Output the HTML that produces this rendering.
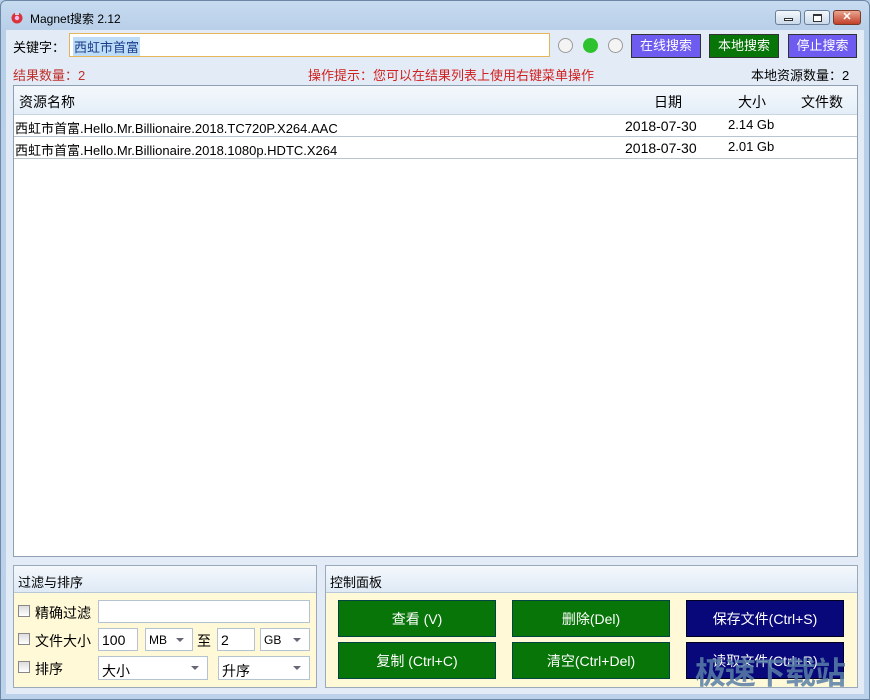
<!DOCTYPE html>
<html><head><meta charset="utf-8"><style>
*{margin:0;padding:0;box-sizing:border-box}
body{width:870px;height:700px;overflow:hidden;font-family:"Liberation Sans","Noto Sans CJK SC",sans-serif;font-size:13px;background:#b9d1ea;position:relative;color:#000}
.a{position:absolute}
.win{left:0;top:0;width:870px;height:700px;background:linear-gradient(#c7dbf0,#b8cfe8 30px,#bcd2ea);border:1px solid #6d87a6;border-radius:6px 6px 0 0}
.client{left:6px;top:30px;width:858px;height:664px;background:#e3ecf6}
.btn{color:#fff;font-size:13px;text-align:center;line-height:22px;border:1px solid #333}
.cb{width:12px;height:12px;border:1px solid #888;background:linear-gradient(#ddd,#fff)}
.inp{background:#fff;border:1px solid #b5c2d2}
.dd:after{content:"";position:absolute;right:8px;top:9px;border:4px solid transparent;border-top:4px solid #667;}
.gb{background:#087508;color:#fff;text-align:center;line-height:36px;font-size:14px;border:1px solid #044}
.bb{background:#08087a;color:#fff;text-align:center;line-height:36px;font-size:14px;border:1px solid #002}
</style></head><body>
<div class="a win"></div>
<div class="a client"></div>
<svg class="a" style="left:10px;top:10px" width="14" height="14"><circle cx="7" cy="8" r="5.5" fill="#d8343a"/><circle cx="7" cy="8" r="2.2" fill="#fbe"/><rect x="5" y="1" width="4" height="4" fill="#c7dbf0"/></svg>
<div class="a" style="left:30px;top:10px;font-size:12px">Magnet搜索 2.12</div>
<div class="a" style="left:775px;top:10px;width:26px;height:15px;border:1px solid #6a7f99;border-radius:3px;background:linear-gradient(#f4f8fc,#cad9ea)"><div class="a" style="left:8px;top:7px;width:9px;height:3px;border:1px solid #333;background:#fff"></div></div>
<div class="a" style="left:804px;top:10px;width:26px;height:15px;border:1px solid #6a7f99;border-radius:3px;background:linear-gradient(#f4f8fc,#cad9ea)"><div class="a" style="left:8px;top:3px;width:9px;height:8px;border:1px solid #333;border-top-width:2px;background:#fff"></div></div>
<div class="a" style="left:833px;top:10px;width:28px;height:15px;border:1px solid #7a3a2a;border-radius:3px;background:linear-gradient(#e9a58e,#c2402a);color:#fff;font-weight:bold;font-size:11px;text-align:center;line-height:13px">✕</div>
<div class="a" style="left:13px;top:37px">关键字：</div>
<div class="a inp" style="left:69px;top:33px;width:481px;height:24px;border-color:#e5b55a"><span style="position:absolute;left:3px;top:3px;background:#bcdcf8;color:#1a3d8a;padding:0 1px">西虹市首富</span></div>
<div class="a" style="left:558px;top:38px;width:15px;height:15px;border:1px solid #999;border-radius:50%;background:#f4f4f4"></div>
<div class="a" style="left:583px;top:38px;width:15px;height:15px;border-radius:50%;background:#2ec22e"></div>
<div class="a" style="left:608px;top:38px;width:15px;height:15px;border:1px solid #999;border-radius:50%;background:#f4f4f4"></div>
<div class="a btn" style="left:631px;top:34px;width:70px;height:24px;background:#6e5cf0">在线搜索</div>
<div class="a btn" style="left:709px;top:34px;width:70px;height:24px;background:#087508">本地搜索</div>
<div class="a btn" style="left:788px;top:34px;width:69px;height:24px;background:#6e5cf0">停止搜索</div>
<div class="a" style="left:13px;top:65px;color:#c0302a">结果数量：2</div>
<div class="a" style="left:308px;top:65px;color:#d02020">操作提示：您可以在结果列表上使用右键菜单操作</div>
<div class="a" style="left:751px;top:65px">本地资源数量：2</div>
<div class="a" style="left:13px;top:85px;width:845px;height:472px;background:#fff;border:1px solid #8fa0b4"></div>
<div class="a" style="left:14px;top:86px;width:843px;height:29px;background:linear-gradient(#f4f8fc,#e4eef8);border-bottom:1px solid #c8d4e0"></div>
<div class="a" style="left:19px;top:92px;font-size:14px">资源名称</div>
<div class="a" style="left:654px;top:92px;font-size:14px">日期</div>
<div class="a" style="left:738px;top:92px;font-size:14px">大小</div>
<div class="a" style="left:801px;top:92px;font-size:14px">文件数</div>
<div class="a" style="left:14px;top:136px;width:843px;height:1px;background:#b8c4d0"></div>
<div class="a" style="left:14px;top:158px;width:843px;height:1px;background:#b8c4d0"></div>
<div class="a" style="left:15px;top:118px">西虹市首富.Hello.Mr.Billionaire.2018.TC720P.X264.AAC</div>
<div class="a" style="left:625px;top:118px;font-size:14px">2018-07-30</div>
<div class="a" style="left:728px;top:117px">2.14 Gb</div>
<div class="a" style="left:15px;top:140px">西虹市首富.Hello.Mr.Billionaire.2018.1080p.HDTC.X264</div>
<div class="a" style="left:625px;top:140px;font-size:14px">2018-07-30</div>
<div class="a" style="left:728px;top:139px">2.01 Gb</div>

<div class="a" style="left:13px;top:565px;width:304px;height:123px;background:#fff9d8;border:1px solid #9aaabb"></div>
<div class="a" style="left:14px;top:566px;width:302px;height:27px;background:linear-gradient(#f4f8fc,#dfeaf6);border-bottom:1px solid #b8c8d8"></div>
<div class="a" style="left:18px;top:572px">过滤与排序</div>
<div class="a" style="left:325px;top:565px;width:533px;height:123px;background:#fff9d8;border:1px solid #9aaabb"></div>
<div class="a" style="left:326px;top:566px;width:531px;height:27px;background:linear-gradient(#f4f8fc,#dfeaf6);border-bottom:1px solid #b8c8d8"></div>
<div class="a" style="left:330px;top:572px">控制面板</div>

<div class="a cb" style="left:18px;top:605px"></div><div class="a" style="left:35px;top:603px;font-size:14px">精确过滤</div>
<div class="a inp" style="left:98px;top:600px;width:212px;height:23px"></div>
<div class="a cb" style="left:18px;top:633px"></div><div class="a" style="left:35px;top:631px;font-size:14px">文件大小</div>
<div class="a inp" style="left:98px;top:628px;width:40px;height:23px;padding:3px 3px;font-size:14px">100</div>
<div class="a inp dd" style="left:145px;top:628px;width:48px;height:23px;padding:4px 3px;font-size:12px">MB</div>
<div class="a" style="left:197px;top:631px;font-size:14px">至</div>
<div class="a inp" style="left:217px;top:628px;width:38px;height:23px;padding:3px 3px;font-size:14px">2</div>
<div class="a inp dd" style="left:260px;top:628px;width:50px;height:23px;padding:4px 3px;font-size:12px">GB</div>
<div class="a cb" style="left:18px;top:661px"></div><div class="a" style="left:35px;top:659px;font-size:14px">排序</div>
<div class="a inp dd" style="left:98px;top:656px;width:110px;height:24px;padding:4px 3px;font-size:14px">大小</div>
<div class="a inp dd" style="left:218px;top:656px;width:92px;height:24px;padding:4px 3px;font-size:14px">升序</div>

<div class="a gb" style="left:338px;top:600px;width:158px;height:37px">查看 (V)</div>
<div class="a gb" style="left:512px;top:600px;width:158px;height:37px">删除(Del)</div>
<div class="a bb" style="left:686px;top:600px;width:158px;height:37px">保存文件(Ctrl+S)</div>
<div class="a gb" style="left:338px;top:642px;width:158px;height:37px">复制 (Ctrl+C)</div>
<div class="a gb" style="left:512px;top:642px;width:158px;height:37px">清空(Ctrl+Del)</div>
<div class="a bb" style="left:686px;top:642px;width:158px;height:37px">读取文件(Ctrl+R)</div>
<div class="a" style="left:695px;top:648px;font-size:31px;font-weight:bold;color:#5a7fa8;opacity:.85;letter-spacing:-1px">极速下载站</div>
</body></html>
